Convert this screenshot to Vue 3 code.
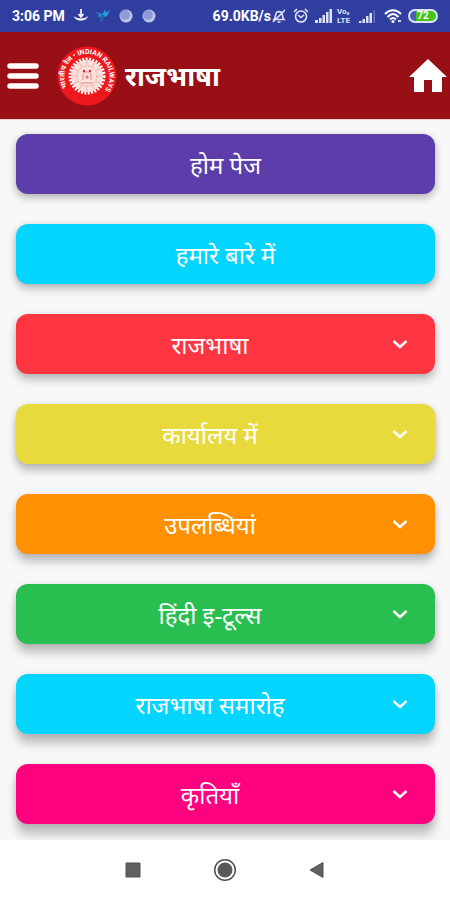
<template>
  <div class="app">
    <div class="status">
      <span class="status__time">3:06 PM</span>
      <svg class="status__notices" width="84" height="18" viewBox="0 0 84 18" aria-hidden="true">
        <path d="M2 9c1 6 13 6 14 0-2 2-4 2.400-7 2.400S4 11 2 9z" fill="#fff" />
        <path d="M9 2v7M6.500 7L9 10l2.500-3" fill="none" stroke="#fff" stroke-width="1.600" />
        <path d="M23 5l7 2 2-2 1-3 1 4 4-3-3 6-3 1-3 5-1-5-3-1 3-1z" fill="#2c9be0" />
        <path d="M30 7l3 2-4 5-1-4z" fill="#176c9d" />
        <g v-for="x in [55, 78]" :key="x">
          <circle :cx="x - 1" cy="9" r="6.500" fill="#c0c6e8" />
          <circle :cx="x - 2" cy="8" r="5" fill="#8f9bd6" />
        </g>
      </svg>

      <div class="status__right">
        <span class="status__speed">69.0KB/s</span>
        <svg width="16" height="16" viewBox="0 0 16 16" aria-hidden="true">
          <path d="M3 11.500c2-2 1-4 2-6 1-2.500 5-2.500 6 0 1 2 0 4 2 6zM6.500 14h3M14 2L2 14" fill="none" stroke="#dfe2f6" stroke-width="1.600" />
        </svg>
        <svg class="status__alarm" width="16" height="16" viewBox="0 0 16 16" aria-hidden="true">
          <circle cx="8" cy="8.500" r="5.500" fill="none" stroke="#dfe2f6" stroke-width="1.600" />
          <path d="M1 4l3-3M15 4l-3-3M5 7l3 2.500L11 7" fill="none" stroke="#dfe2f6" stroke-width="1.600" />
        </svg>
        <svg class="status__signal" width="18" height="14" viewBox="0 0 18 14" aria-hidden="true">
          <path d="M0 14v-3h3v3zM4 14V9h2.500v5zM7.500 14V6H10v8zM11 14V3h2.500v11zM14.500 14V0H17v14z" fill="#dfe2f6" />
        </svg>
        <span class="status__lte"><span>Vo₀</span><span>LTE</span></span>
        <svg class="status__signal" width="17" height="14" viewBox="0 0 17 14" aria-hidden="true">
          <path d="M0 14v-2h2.500v2zM3.500 14v-4H6v4zM7 14V7h2.500v7zM10.500 14V4H13v10z" fill="#dfe2f6" />
          <path d="M14.500 14V1H16v13z" fill="#6975be" />
        </svg>
        <svg class="status__wifi" width="18" height="16" viewBox="0 0 18 16" aria-hidden="true">
          <path d="M1 6c5-5 11-5 16 0M3.500 9c4-4 7-4 11 0M6 11.500c2-2 4-2 6 0" fill="none" stroke="#fff" stroke-width="2" />
          <circle cx="9" cy="13.500" r="1.500" fill="#fff" />
          <path d="M14 12h3v2h-3z" fill="#cdd2ee" />
        </svg>
        <span class="battery">72</span>
      </div>
    </div>

    <header class="header">
      <button class="header__menu" type="button" aria-label="मेनू">
        <svg width="32" height="28" viewBox="0 0 32 28" aria-hidden="true">
          <path d="M3 4h26M3 14h26M3 24h26" stroke="#fff" stroke-width="5.500" stroke-linecap="round" />
        </svg>
      </button>
      <svg class="header__logo" width="60" height="60" viewBox="0 0 60 60" aria-hidden="true">
        <defs>
          <path id="ring" d="M12 44A22.500 22.500 0 1 1 48 44" />
        </defs>
        <circle cx="30" cy="30" r="29.500" fill="#ed171e" />
        <text class="header__ring"><textPath href="#ring" startOffset="3">भारतीय रेल • INDIAN RAILWAYS</textPath></text>
        <circle cx="30" cy="30" r="16" fill="#fbe0dc" />
        <circle cx="30" cy="30" r="17" fill="none" stroke="#fff" stroke-width="3" stroke-dasharray="2 1.400" />
        <g stroke="#f0a09c" stroke-width="0.700">
          <path v-for="n in 12" :key="n" d="M30 20V14" :transform="`rotate(${n * 30} 30 30)`" />
        </g>
        <circle cx="30" cy="30" r="10" fill="none" stroke="#f0a09c" stroke-width="0.800" stroke-dasharray="2 1" />
        <path d="M26 34v-6l2-2h4l2 2v6M24 37h12" fill="none" stroke="#ec8a88" />
        <circle cx="27" cy="25" r="1.200" fill="#c62a35" />
        <circle cx="33" cy="25" r="1.200" fill="#c62a35" />
        <circle cx="30" cy="31" r="1.500" fill="#e86c6c" />
      </svg>
      <h1 class="header__title">राजभाषा</h1>
      <a class="header__home" href="#" aria-label="होम">
        <svg width="38" height="34" viewBox="0 0 38 34" aria-hidden="true">
          <path d="M19 0L38 18h-5v15H23V21h-8v12H5V18H0z" fill="#fff" />
        </svg>
      </a>
    </header>

    <main class="menu">
      <button
        v-for="(item, index) in items"
        :key="item.label"
        type="button"
        class="menu__item"
        :class="`menu__item--${item.color}`"
        :style="{ '--drop': `${index + 4}px` }"
      >
        <span class="menu__label">{{ item.label }}</span>
        <svg v-if="item.expandable" class="menu__chevron" width="24" height="24" viewBox="0 0 24 24" aria-hidden="true">
          <path d="M5.500 9L12 15l6.500-6" fill="none" stroke="currentColor" stroke-width="2.500" />
        </svg>
      </button>
    </main>

    <nav class="nav">
      <button type="button" aria-label="Recent apps">
        <svg width="24" height="24" viewBox="0 0 24 24"><path d="M5 5h14v14H5z" fill="#606060" stroke="#505050" /></svg>
      </button>
      <button type="button" aria-label="Home">
        <svg width="24" height="24" viewBox="0 0 24 24">
          <circle cx="12" cy="12" r="10.300" fill="none" stroke="#505050" stroke-width="1.500" />
          <circle cx="12" cy="12" r="7.500" fill="#5a5a5a" />
        </svg>
      </button>
      <button type="button" aria-label="Back">
        <svg width="24" height="24" viewBox="0 0 24 24"><path d="M5 12l13-7.500v15z" fill="#606060" stroke="#505050" /></svg>
      </button>
    </nav>
  </div>
</template>

<script setup>
const items = [
  { label: 'होम पेज', color: 'purple' },
  { label: 'हमारे बारे में', color: 'cyan' },
  { label: 'राजभाषा', color: 'red', expandable: true },
  { label: 'कार्यालय में', color: 'yellow', expandable: true },
  { label: 'उपलब्धियां', color: 'orange', expandable: true },
  { label: 'हिंदी इ-टूल्स', color: 'green', expandable: true },
  { label: 'राजभाषा समारोह', color: 'cyan', expandable: true },
  { label: 'कृतियाँ', color: 'pink', expandable: true },
]
</script>

<style>
body {
  margin: 0;
  background: #fff;
}
</style>

<style scoped>
.app {
  display: flex;
  flex-direction: column;
  min-height: 100vh;
  font-family: Roboto, "Noto Sans", sans-serif;
}

button {
  padding: 0;
  border: 0;
  background: none;
  font: inherit;
  cursor: pointer;
}

svg {
  display: block;
  flex: none;
}

.status {
  display: flex;
  align-items: center;
  height: 32px;
  padding: 0 12px;
  background: #303f9f;
  color: #fff;
  font-size: 14px;
  font-weight: 700;
  white-space: nowrap;
}

.status__notices {
  margin-left: 7px;
}

.status__right {
  display: flex;
  align-items: center;
  margin-left: auto;
}

.status__alarm {
  margin-left: 6px;
}

.status__signal {
  margin-left: 6px;
}

.status__lte {
  display: flex;
  flex-direction: column;
  width: 16px;
  margin-left: 4px;
  color: #dfe2f6;
  font-size: 8px;
  line-height: 9px;
}

.status__wifi {
  margin-left: 8px;
}

.battery {
  box-sizing: border-box;
  width: 30px;
  height: 14px;
  margin-left: 6px;
  border: 2px solid #dfe2f6;
  border-radius: 7px;
  background: linear-gradient(90deg, #4d5fb4 24%, #43c51c 24%);
  font-size: 10px;
  line-height: 10px;
  text-align: center;
}

.header {
  display: flex;
  align-items: center;
  height: 87px;
  padding: 0 3px 0 7px;
  border-bottom: 1px solid #f6d4d6;
  background: #990f16;
}

.header__logo {
  margin-left: 18px;
}

.header__ring {
  fill: #fff;
  font-size: 7px;
  font-weight: 700;
}

.header__title {
  margin: 0 0 0 8px;
  padding-top: 2px;
  color: #fff;
  font-size: 27px;
  font-weight: 700;
  line-height: 36px;
}

.header__home {
  margin-left: auto;
}

.menu {
  display: flex;
  flex: 1;
  flex-direction: column;
  gap: 30px;
  padding: 14px 15px 16px 16px;
  overflow: hidden;
  background: #f8f8f8;
}

.menu__item {
  display: flex;
  align-items: center;
  height: 60px;
  padding: 0 16px;
  border-radius: 12px;
  box-shadow: 0 var(--drop) 10px rgba(0, 0, 0, 0.22), 0 1px 6px rgba(0, 0, 0, 0.12);
  color: #fff;
  font-family: "Noto Sans", sans-serif;
  font-size: 24px;
  line-height: 36px;
}

.menu__label {
  flex: 1;
  padding-top: 2px;
  text-align: center;
}

.menu__chevron {
  margin-right: 7px;
}

.menu__item--purple { background: #5c3daa; }
.menu__item--cyan { background: #03d5ff; }
.menu__item--red { background: #ff3542; }
.menu__item--yellow { background: #e8d93d; }
.menu__item--orange { background: #ff9100; }
.menu__item--green { background: #29bf50; }
.menu__item--pink { background: #ff007f; }

.nav {
  display: flex;
  align-items: center;
  justify-content: center;
  gap: 68px;
  height: 60px;
  background: #fff;
}
</style>
